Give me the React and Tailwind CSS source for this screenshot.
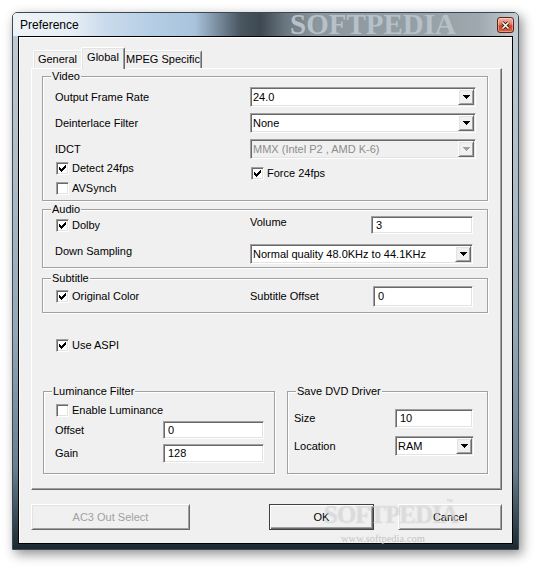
import React from "react";

const SUNKEN =
  "border border-t-[#a0a0a0] border-l-[#a0a0a0] border-r-white border-b-white shadow-[inset_1px_1px_0_#696969,inset_-1px_-1px_0_#e3e3e3]";
const RAISED =
  "border border-t-white border-l-white border-r-[#696969] border-b-[#696969] shadow-[inset_1px_1px_0_#e3e3e3,inset_-1px_-1px_0_#a0a0a0]";

function CheckMark() {
  return (
    <svg width="7" height="7" viewBox="0 0 7 7" shapeRendering="crispEdges">
      <path
        d="M6 0h1v1h-1z M5 1h2v1h-2z M0 2h1v1h-1z M4 2h3v1h-3z M0 3h2v1h-2z M3 3h3v1h-3z M0 4h5v1h-5z M1 5h3v1h-3z M2 6h1v1h-1z"
        fill="#000"
      />
    </svg>
  );
}

function Check({ checked, label }) {
  return (
    <div className="flex items-center gap-[3px] h-[13px]">
      <span
        className={`w-[13px] h-[13px] shrink-0 bg-white flex items-center justify-center ${SUNKEN}`}
      >
        {checked && <CheckMark />}
      </span>
      <span className="whitespace-nowrap">{label}</span>
    </div>
  );
}

function Arrow({ disabled }) {
  return (
    <svg width="7" height="4" viewBox="0 0 7 4" shapeRendering="crispEdges">
      <path
        d="M0 0h7v1h-7z M1 1h5v1h-5z M2 2h3v1h-3z M3 3h1v1h-1z"
        fill={disabled ? "#a0a0a0" : "#000"}
      />
    </svg>
  );
}

function Combo({ value, className, disabled }) {
  return (
    <div
      className={`flex items-center ${SUNKEN} ${
        disabled ? "bg-[#f0f0f0] text-[#8d8d8d]" : "bg-white"
      } ${className}`}
    >
      <span className="flex-1 pl-[2px] whitespace-nowrap overflow-hidden">{value}</span>
      <span
        className={`w-[16px] self-stretch m-px flex items-center justify-center bg-[#f0f0f0] ${RAISED}`}
      >
        <Arrow disabled={disabled} />
      </span>
    </div>
  );
}

function Input({ value, className }) {
  return (
    <div className={`flex items-center pl-[4px] bg-white ${SUNKEN} ${className}`}>
      {value}
    </div>
  );
}

function Group({ label, className, children }) {
  return (
    <div
      className={`relative border border-[#a0a0a0] shadow-[inset_1px_1px_0_#fff,1px_1px_0_#fff] ${className}`}
    >
      <span className="absolute -top-[7px] left-[8px] px-px bg-[#f0f0f0] whitespace-nowrap">
        {label}
      </span>
      {children}
    </div>
  );
}

export default function App() {
  return (
    <div className="relative w-[540px] h-[570px] overflow-hidden bg-white pt-[12px] pl-[12px] font-['Liberation_Sans',Arial,sans-serif] text-[11px] leading-[13px] text-black">
      {/* Window */}
      <div className="w-[507px] h-[538px] flex flex-col overflow-hidden rounded-t-[5px] border border-[#3a4852] shadow-[3px_4px_12px_rgba(0,0,0,0.45)] bg-[linear-gradient(180deg,#c3ced6_0%,#aebdc8_30%,#93a7b6_60%,#687f90_85%,#2a3a44_97%,#1b2830_100%)]">
        {/* Title bar */}
        <div className="relative h-[23px] shrink-0 flex items-start overflow-hidden bg-[linear-gradient(90deg,#eef3f7_0%,#e6eef5_12%,#cadcec_18%,#b4cde4_28%,#a9c3dc_36%,#7f93a5_40%,#4a5661_45%,#3d4852_49%,#6b7780_54%,#8b969e_60%,#949fa6_80%,#9ea8ae_92%,#c4ccd1_100%)]">
          <span className="absolute left-[277px] top-0 font-['Liberation_Serif',serif] font-bold text-[29px] leading-[23px] text-[#b7c1c7] whitespace-nowrap">
            SOFTPEDIA
          </span>
          <span className="relative ml-[7px] mt-[5px] text-[12px] leading-[14px] text-black">
            Preference
          </span>
          <div className="relative ml-auto mr-[4px] mt-[4px] w-[17px] h-[16px] rounded-[3px] border border-[#5e2418] bg-[linear-gradient(180deg,#f2b8a4_0%,#e27d60_45%,#c8472c_55%,#d9623f_100%)] shadow-[inset_0_0_0_1px_rgba(255,255,255,0.35)] flex items-center justify-center">
            <svg width="9" height="9" viewBox="0 0 9 9">
              <path d="M1.5 1.5 L7.5 7.5 M7.5 1.5 L1.5 7.5" stroke="#4a1a10" strokeWidth="3.2" />
              <path d="M1.5 1.5 L7.5 7.5 M7.5 1.5 L1.5 7.5" stroke="#fff" strokeWidth="1.6" />
            </svg>
          </div>
        </div>

        {/* Client */}
        <div className="flex-1 px-[5px] pb-[5px]">
          <div className="w-[495px] h-[508px] border border-black bg-[#f0f0f0] shadow-[inset_1px_1px_0_#fff] pl-[12px] pt-[10px]">
            {/* Tabs */}
            <div className="flex items-end h-[21px] ml-[2px]">
              <div className="w-[48px] h-[18px] flex items-center justify-center rounded-tl-[2px] border-t border-l border-t-white border-l-white shadow-[inset_1px_1px_0_#e3e3e3]">
                General
              </div>
              <div className="relative z-10 -mb-px w-[44px] h-[22px] flex items-center justify-center pb-[2px] bg-[#f0f0f0] rounded-t-[2px] border-t border-l border-r border-t-white border-l-white border-r-[#696969] shadow-[inset_1px_1px_0_#e3e3e3,inset_-1px_0_0_#a0a0a0]">
                Global
              </div>
              <div className="w-[77px] h-[18px] flex items-center justify-center whitespace-nowrap rounded-tr-[2px] border-t border-r border-t-white border-r-[#696969] shadow-[inset_0_1px_0_#e3e3e3,inset_-1px_0_0_#a0a0a0]">
                MPEG Specific
              </div>
            </div>

            {/* Panel */}
            <div className="w-[471px] h-[422px] border border-t-white border-l-white border-r-[#696969] border-b-[#696969] shadow-[inset_-1px_-1px_0_#a0a0a0] pl-[10px] pt-[7px]">
              {/* Video */}
              <Group label="Video" className="w-[446px] h-[125px] pt-[10px]">
                <div className="flex flex-col gap-[6px]">
                  <div className="flex items-center h-[20px]">
                    <span className="w-[207px] pl-[12px]">Output Frame Rate</span>
                    <Combo value="24.0" className="w-[226px] h-[20px]" />
                  </div>
                  <div className="flex items-center h-[20px]">
                    <span className="w-[207px] pl-[12px]">Deinterlace Filter</span>
                    <Combo value="None" className="w-[226px] h-[20px]" />
                  </div>
                  <div className="flex items-center h-[20px]">
                    <span className="w-[207px] pl-[12px]">IDCT</span>
                    <Combo value="MMX (Intel P2 , AMD K-6)" disabled className="w-[226px] h-[20px]" />
                  </div>
                </div>
                <div className="flex mt-[3px]">
                  <div className="w-[207px] pl-[13px] flex flex-col gap-[7px]">
                    <Check checked label="Detect 24fps" />
                    <Check label="AVSynch" />
                  </div>
                  <div className="mt-[5px] ml-px">
                    <Check checked label="Force 24fps" />
                  </div>
                </div>
              </Group>

              {/* Audio */}
              <Group label="Audio" className="mt-[8px] w-[446px] h-[59px] pt-[6px]">
                <div className="flex items-center h-[18px]">
                  <div className="w-[207px] pl-[13px]">
                    <Check checked label="Dolby" />
                  </div>
                  <span className="w-[121px] pb-[6px]">Volume</span>
                  <Input value="3" className="w-[102px] h-[18px]" />
                </div>
                <div className="flex items-center h-[20px] mt-[10px]">
                  <span className="w-[207px] pl-[12px] pb-[6px]">Down Sampling</span>
                  <Combo value="Normal quality 48.0KHz to 44.1KHz" className="w-[223px] h-[20px]" />
                </div>
              </Group>

              {/* Subtitle */}
              <Group label="Subtitle" className="mt-[10px] w-[446px] h-[35px] pt-[7px]">
                <div className="flex items-center h-[21px]">
                  <div className="w-[207px] pl-[13px]">
                    <Check checked label="Original Color" />
                  </div>
                  <span className="w-[123px]">Subtitle Offset</span>
                  <Input value="0" className="w-[100px] h-[21px]" />
                </div>
              </Group>

              {/* Use ASPI */}
              <div className="mt-[26px] ml-[14px]">
                <Check checked label="Use ASPI" />
              </div>

              {/* Bottom groups */}
              <div className="flex mt-[39px]">
                <Group label="Luminance Filter" className="ml-px w-[232px] h-[83px] pt-[12px]">
                  <div className="pl-[12px]">
                    <Check label="Enable Luminance" />
                  </div>
                  <div className="flex items-center h-[18px] mt-[4px]">
                    <span className="w-[119px] pl-[11px]">Offset</span>
                    <Input value="0" className="w-[101px] h-[18px]" />
                  </div>
                  <div className="flex items-center h-[19px] mt-[5px]">
                    <span className="w-[119px] pl-[11px]">Gain</span>
                    <Input value="128" className="w-[101px] h-[19px]" />
                  </div>
                </Group>
                <Group label="Save DVD Driver" className="ml-[12px] w-[201px] h-[83px] pt-[17px]">
                  <div className="flex items-center h-[19px]">
                    <span className="w-[107px] pl-[6px]">Size</span>
                    <Input value="10" className="w-[78px] h-[19px]" />
                  </div>
                  <div className="flex items-center h-[20px] mt-[8px]">
                    <span className="w-[107px] pl-[6px]">Location</span>
                    <Combo value="RAM" className="w-[79px] h-[20px]" />
                  </div>
                </Group>
              </div>
            </div>

            {/* Buttons */}
            <div className="flex mt-[14px] h-[26px]">
              <div className={`w-[159px] h-[26px] flex items-center justify-center text-[#a0a0a0] ${RAISED}`}>
                AC3 Out Select
              </div>
              <div className="ml-[79px] w-[105px] h-[26px] flex items-center justify-center border border-[#404040] shadow-[inset_1px_1px_0_#fff,inset_-1px_-1px_0_#696969,inset_-2px_-2px_0_#a0a0a0]">
                OK
              </div>
              <div className={`ml-[24px] w-[104px] h-[26px] flex items-center justify-center ${RAISED}`}>
                Cancel
              </div>
            </div>
          </div>
        </div>
      </div>

      {/* Softpedia watermark over buttons */}
      <span className="absolute left-[324px] top-[502px] font-['Liberation_Serif',serif] font-bold text-[25px] leading-[26px] text-[rgba(255,255,255,0.35)] [text-shadow:0_0_1px_rgba(150,150,150,0.45)] tracking-[-1px] whitespace-nowrap">
        SOFTPEDIA
      </span>
      <span className="absolute left-[446px] top-[498px] font-['Liberation_Sans',sans-serif] text-[7px] leading-[8px] text-[#cccccc]">
        ™
      </span>
      <span className="absolute left-[341px] top-[533px] font-['Liberation_Serif',serif] text-[10.5px] leading-[11px] text-[#c4c4c4] whitespace-nowrap">
        www.softpedia.com
      </span>
    </div>
  );
}
